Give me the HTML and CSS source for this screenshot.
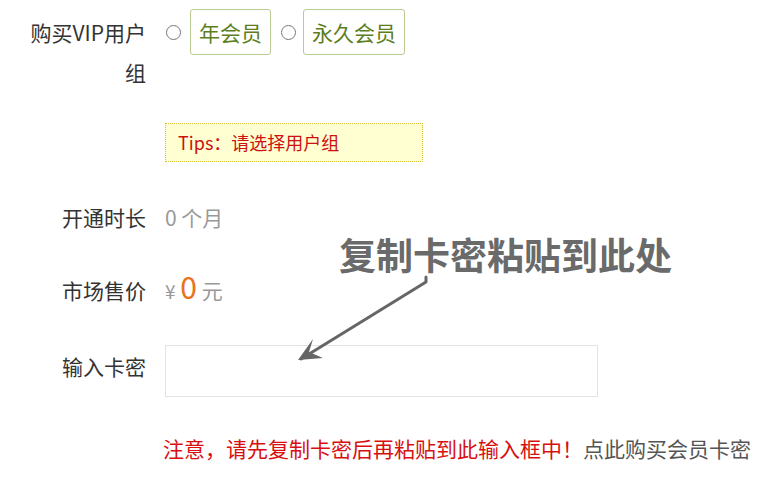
FILE: index.html
```html
<!DOCTYPE html>
<html lang="zh-CN">
<head>
  <meta charset="UTF-8" />
  <title>购买VIP会员</title>
  <link rel="stylesheet" href="styles.css">
</head>
<body>
  <div class="form">
    <div class="row row-group">
      <div class="label">购买VIP用户<br>组</div>
      <div class="field options">
        <label class="opt"><span class="radio"></span><span class="tag">年会员</span></label>
        <label class="opt"><span class="radio"></span><span class="tag">永久会员</span></label>
      </div>
    </div>

    <div class="row row-tips">
      <div class="label"></div>
      <div class="field"><div class="tips">Tips：请选择用户组</div></div>
    </div>

    <div class="row row-time">
      <div class="label">开通时长</div>
      <div class="field muted">0 个月</div>
    </div>

    <div class="row row-price">
      <div class="label">市场售价</div>
      <div class="field muted"><span class="yen">¥</span> <span class="price">0</span> 元</div>
    </div>

    <div class="row row-input">
      <div class="label">输入卡密</div>
      <div class="field"><input type="text" class="card" /></div>
    </div>

    <div class="row row-note">
      <div class="label"></div>
      <div class="field note"><span class="warn">注意，请先复制卡密后再粘贴到此输入框中！</span><a class="buy" href="#">点此购买会员卡密</a></div>
    </div>
  </div>

  <!-- annotation drawn over the form -->
  <div class="callout">复制卡密粘贴到此处</div>
  <svg class="arrow" width="770" height="488" viewBox="0 0 770 488">
    <g fill="none" stroke="#666" stroke-width="3" stroke-linecap="round" stroke-linejoin="round">
      <path d="M426 277 L426 282 L301 359" />
    </g>
    <path d="M298 360 L313 339 L309 352 L323 358 Z" fill="#666" />
  </svg>
</body>
</html>
```

FILE: styles.css
```css
body { margin: 0; font-family: "Noto Sans CJK SC", "Noto Sans", sans-serif; color: #333; background: #fff; font-size: 21px; }
.form { padding-top: 9px; }
.row { display: flex; align-items: flex-start; line-height: 40px; min-height: 40px; }
.label { width: 146px; text-align: right; flex: none; }
.field { margin-left: 19px; }

.row-group { height: 114px; }
.row-group .label { margin-top: 3px; }
.options { display: flex; align-items: center; }
.opt { display: flex; align-items: center; }
.radio { width: 13px; height: 13px; border: 1px solid #777; border-radius: 50%; margin: 0 9px 0 1px; }
.opt + .opt { margin-left: 9px; }
.opt + .opt .radio { margin-right: 7px; }
.tag { display: block; height: 44px; line-height: 44px; padding: 0 8px; border: 1px solid #b9cb93; border-radius: 3px; color: #5d7e1c; }

.row-tips { height: 74px; }
.tips { width: 244px; height: 37px; line-height: 37px; padding-left: 12px; background: #ffffd2; border: 1px dotted #d6bf3c; color: #cc1111; font-size: 18px; }

.muted { color: #999; }
.row-time { height: 75px; }
.row-price { height: 73px; }
.row-price .label { margin-top: -2px; }
.row-price .field { margin-top: -2px; }
.yen { font-size: 19px; }
.price { color: #e8731a; font-size: 30px; line-height: 1; }

.row-input { height: 83px; }
.row-input .label { margin-top: 1px; }
.card { width: 433px; height: 52px; box-sizing: border-box; border: 1px solid #e3e3e3; margin: 0; padding: 0 10px; font: inherit; }

.note { margin-left: 17px; }
.warn { color: #d70f0f; }
.buy { color: #555; text-decoration: none; }

.callout { position: absolute; left: 339px; top: 228px; font-size: 37px; line-height: 52px; font-weight: bold; color: #6a6a6a; }
.arrow { position: absolute; left: 0; top: 0; pointer-events: none; }
```
